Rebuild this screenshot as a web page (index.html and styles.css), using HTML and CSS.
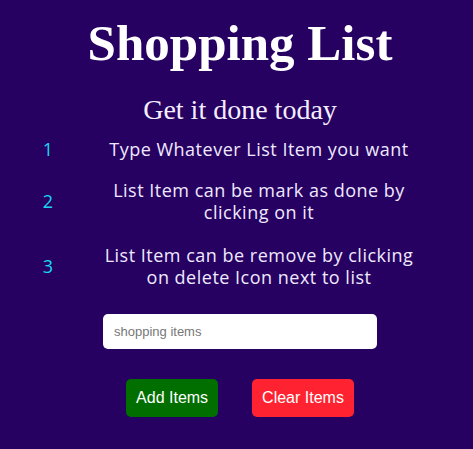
FILE: index.html
```html
<!DOCTYPE html>
<html>
<head>
<meta charset="utf-8">
<link rel="stylesheet" href="styles.css">
</head>
<body>
<main class="app">
  <h1 class="title">Shopping List</h1>
  <h2 class="subtitle">Get it done today</h2>
  <ol class="steps">
    <li class="step"><span class="num">1</span><span class="text">Type Whatever List Item you want</span></li>
    <li class="step"><span class="num">2</span><span class="text">List Item can be mark as done by clicking on it</span></li>
    <li class="step step-last"><span class="num">3</span><span class="text">List Item can be remove by clicking on delete Icon next to list</span></li>
  </ol>
  <div class="form">
    <input class="field" type="text" placeholder="shopping items">
  </div>
  <div class="actions">
    <button class="btn btn-add">Add Items</button>
    <button class="btn btn-clear">Clear Items</button>
  </div>
</main>
</body>
</html>
```
FILE: styles.css
```css
html, body {
  margin: 0;
  padding: 0;
  background: #260161;
}
body {
  width: 473px;
  height: 449px;
  overflow: hidden;
}
.app {
  display: flex;
  flex-direction: column;
  align-items: center;
  padding: 12px 0 0 7px;
}
.title {
  margin: 0;
  font-family: "Liberation Serif", "DejaVu Serif", serif;
  font-weight: bold;
  font-size: 51px;
  line-height: 62px;
  color: #ffffff;
}
.subtitle {
  margin: 20px 0 0;
  font-family: "Liberation Serif", serif;
  font-weight: normal;
  font-size: 28px;
  line-height: 32px;
  color: #f4eeff;
}
.steps {
  list-style: none;
  margin: 11px 0 0;
  padding: 0;
  width: 100%;
  display: flex;
  flex-direction: column;
  gap: 18px;
}
.step {
  display: flex;
  align-items: center;
  padding: 0 49px 0 21px;
}
.step-last {
  margin-top: 3px;
}
.num {
  width: 40px;
  text-align: center;
  font-family: "Open Sans", sans-serif;
  font-size: 18px;
  color: #1ad6f2;
}
.text {
  flex: 1;
  margin-left: 26px;
  text-align: center;
  font-family: "Open Sans", sans-serif;
  font-size: 18px;
  line-height: 22px;
  letter-spacing: 0.5px;
  color: #efe9ff;
}
.form {
  margin-top: 26px;
}
.field {
  box-sizing: border-box;
  width: 274px;
  height: 35px;
  border: none;
  border-radius: 5px;
  padding: 0 11px;
  font-family: "Liberation Sans", Arial, sans-serif;
  font-size: 13px;
  background: #fff;
  outline: none;
}
.field::placeholder {
  color: #777;
}
.actions {
  margin-top: 30px;
  display: flex;
  gap: 34px;
}
.btn {
  height: 38px;
  border: none;
  border-radius: 5px;
  padding: 0 10px;
  font-family: "Liberation Sans", Arial, sans-serif;
  font-size: 16px;
  color: #fff;
  white-space: nowrap;
}
.btn-add {
  background: #006f00;
}
.btn-clear {
  background: #ff2331;
}
```
